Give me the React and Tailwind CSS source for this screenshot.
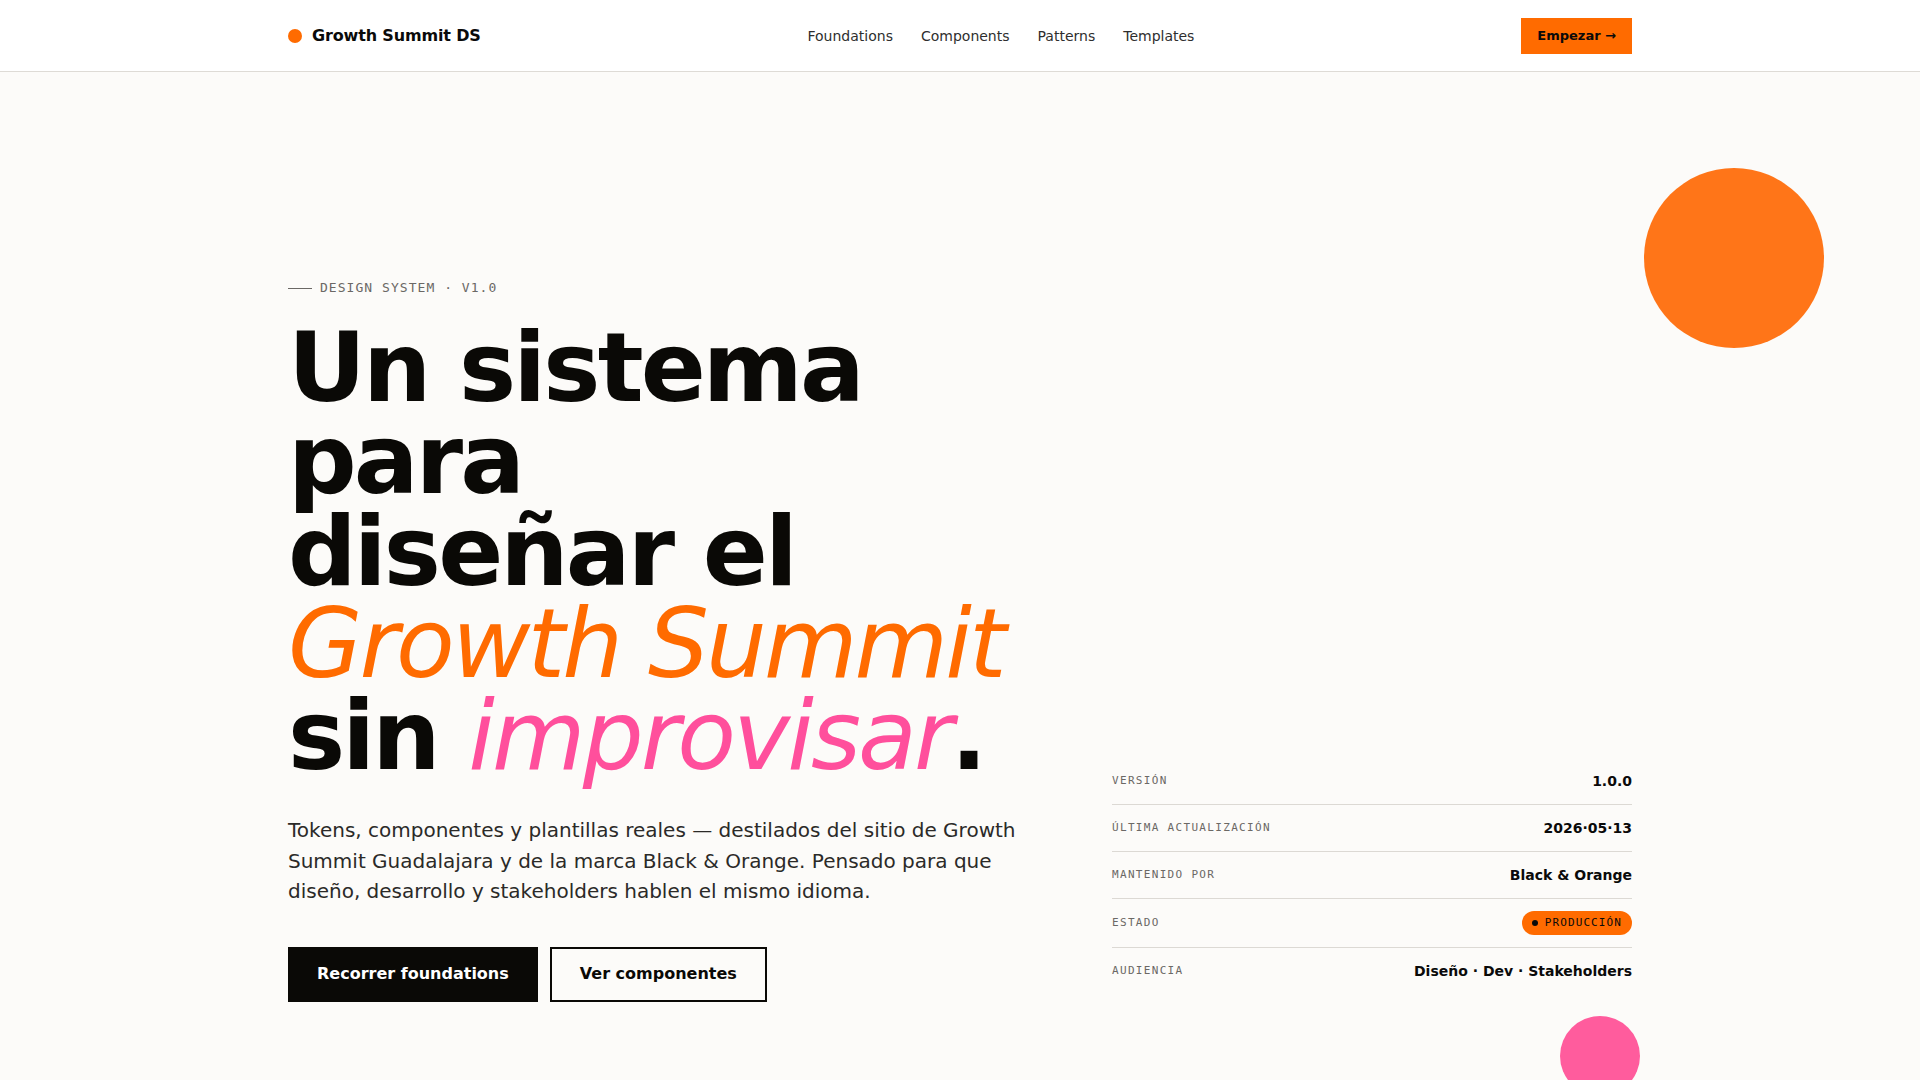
import React from 'react';

const metaRows = [
  { label: 'VERSIÓN', value: '1.0.0' },
  { label: 'ÚLTIMA ACTUALIZACIÓN', value: '2026·05·13' },
  { label: 'MANTENIDO POR', value: 'Black & Orange' },
  { label: 'ESTADO', badge: 'PRODUCCIÓN' },
  { label: 'AUDIENCIA', value: 'Diseño · Dev · Stakeholders' },
];

const navLinks = ['Foundations', 'Components', 'Patterns', 'Templates'];

const Navbar = () => (
  <header className="h-[72px] bg-white border-b border-[#dedbd6]">
    <div className="w-[1344px] mx-auto h-full flex items-center justify-between">
      <a href="#" className="flex items-center gap-2.5">
        <span className="w-3.5 h-3.5 rounded-full bg-[#ff6b00]" />
        <span className="text-base font-bold tracking-[-0.01em] text-[#0a0a0a]">Growth Summit DS</span>
      </a>
      <nav className="flex items-center gap-7">
        {navLinks.map((link) => (
          <a key={link} href="#" className="text-sm text-[#2e2e2e]">
            {link}
          </a>
        ))}
      </nav>
      <button className="h-9 px-4 bg-[#ff6b00] text-[13px] font-bold text-[#0a0a0a]">
        Empezar →
      </button>
    </div>
  </header>
);

const MetaTable = () => (
  <div className="divide-y divide-[#dcd9d4] mb-[8px]">
    {metaRows.map((row) => (
      <div key={row.label} className="flex items-center justify-between py-3">
        <span className="font-['DejaVu_Sans_Mono',monospace] text-[11px] leading-[22px] tracking-[0.12em] text-[#6b6865]">
          {row.label}
        </span>
        {row.badge ? (
          <span className="inline-flex items-center gap-[7px] h-6 px-2.5 rounded-full bg-[#ff6b00] font-['DejaVu_Sans_Mono',monospace] text-[11px] tracking-[0.1em] text-[#0a0a0a]">
            <span className="w-1.5 h-1.5 rounded-full bg-[#0a0a0a]" />
            {row.badge}
          </span>
        ) : (
          <span className="text-sm leading-[22px] font-bold text-[#0a0a0a]">{row.value}</span>
        )}
      </div>
    ))}
  </div>
);

const App = () => {
  return (
    <div className="min-h-screen bg-[#fcfbf9] font-['DejaVu_Sans',sans-serif] overflow-hidden">
      <Navbar />

      <section className="relative h-[1008px]">
        {/* decorative dots */}
        <div className="absolute left-[1644px] top-[96px] w-[180px] h-[180px] rounded-full bg-[#ff7518]" />
        <div className="absolute left-[1560px] top-[944px] w-[80px] h-[80px] rounded-full bg-[#ff5c9d]" />

        <div className="w-[1344px] mx-auto pt-[206px] grid grid-cols-[1fr_520px] gap-16 items-end">
          <div>
            <div className="flex items-center gap-2 mb-6">
              <span className="w-6 h-px bg-[#6b6865]" />
              <span className="font-['DejaVu_Sans_Mono',monospace] text-[13px] leading-5 tracking-[0.08em] text-[#6b6865]">
                DESIGN SYSTEM · V1.0
              </span>
            </div>

            <h1 className="max-w-[760px] text-[96px] leading-[92px] font-bold tracking-[-0.03em] text-[#0a0906]">
              Un sistema para
              <br />
              diseñar el
              <br />
              <em className="font-normal text-[#ff6b00]">Growth Summit</em>
              <br />
              sin <em className="font-normal text-[#ff4f9c]">improvisar</em>.
            </h1>

            <p className="mt-[33px] max-w-[750px] text-xl leading-[30.6px] text-[#2b2a28]">
              Tokens, componentes y plantillas reales — destilados del sitio de Growth Summit
              Guadalajara y de la marca Black &amp; Orange. Pensado para que diseño, desarrollo y
              stakeholders hablen el mismo idioma.
            </p>

            <div className="mt-10 flex items-center gap-3">
              <button className="px-[27px] py-[13.5px] border-2 border-[#0a0906] bg-[#0a0906] text-base leading-6 font-bold text-white">
                Recorrer foundations
              </button>
              <button className="px-7 py-[13.5px] border-2 border-[#0a0906] bg-transparent text-base leading-6 font-bold text-[#0a0906]">
                Ver componentes
              </button>
            </div>
          </div>

          <MetaTable />
        </div>
      </section>
    </div>
  );
};

export default App;
